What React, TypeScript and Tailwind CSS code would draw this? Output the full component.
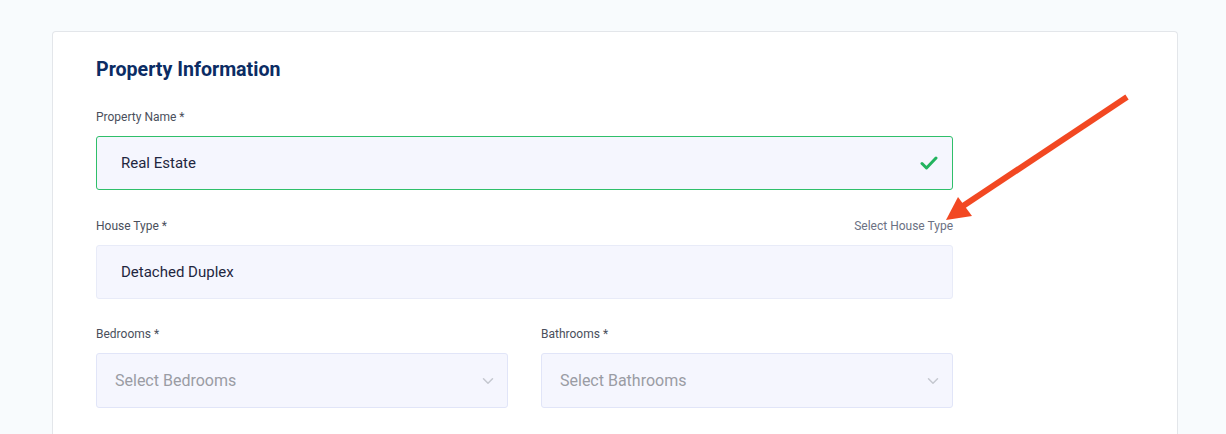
import React from 'react';

// Form field label with the required star
const FieldLabel = ({ text, hint }: { text: string; hint?: string }) => (
  <div className="flex items-center justify-between mb-[11px] h-4">
    <span className="text-[12px] leading-4 text-[#4a4f5c]">{text} *</span>
    {hint && <span className="text-[12px] leading-4 text-[#6b7183]">{hint}</span>}
  </div>
);

const Chevron = () => (
  <svg width="18" height="18" viewBox="0 0 24 24" fill="none" stroke="#c5c8d0" strokeWidth="2" strokeLinecap="round" strokeLinejoin="round">
    <path d="M6 9l6 6 6-6" />
  </svg>
);

const SelectBox = ({ placeholder }: { placeholder: string }) => (
  <div className="flex h-[55px] items-center justify-between rounded-[3px] border border-[#e1e5f8] bg-[#f5f6fe] pl-[18px] pr-[10px]">
    <span className="text-[16px] text-[#9a9ca4]">{placeholder}</span>
    <Chevron />
  </div>
);

export default function App() {
  return (
    <div
      className="relative min-h-[434px] bg-[#f8fbfd] px-[52px] pt-[31px]"
      style={{ fontFamily: 'Roboto, "Liberation Sans", sans-serif' }}
    >
      {/* card */}
      <div className="w-[1126px] h-[420px] rounded-t-[4px] border border-b-0 border-[#e3e6ea] bg-white pl-[43px] pt-[26px]">
        <div className="w-[857px]">
          <h2 className="text-[19.6px] leading-6 font-bold text-[#0b2c64] mb-[27px]">Property Information</h2>

          <FieldLabel text="Property Name" />
          <div className="flex h-[54px] items-center justify-between rounded-[3px] border border-[#2fbf6a] bg-[#f5f6fe] pl-[24px] pr-[14px] mb-[28px]">
            <span className="text-[15px] text-[#1f2640]">Real Estate</span>
            <svg width="18" height="14" viewBox="0 0 18 14" fill="none">
              <path d="M2 7.5l4.5 4.5L16 2" stroke="#22b35e" strokeWidth="3" strokeLinecap="round" strokeLinejoin="round" />
            </svg>
          </div>

          <FieldLabel text="House Type" hint="Select House Type" />
          <div className="flex h-[54px] items-center rounded-[3px] border border-[#e8ebf8] bg-[#f5f6fe] pl-[24px] mb-[27px]">
            <span className="text-[15px] text-[#1f2640]">Detached Duplex</span>
          </div>

          <div className="grid grid-cols-2 gap-[33px]">
            <div>
              <FieldLabel text="Bedrooms" />
              <SelectBox placeholder="Select Bedrooms" />
            </div>
            <div>
              <FieldLabel text="Bathrooms" />
              <SelectBox placeholder="Select Bathrooms" />
            </div>
          </div>
        </div>
      </div>

      {/* annotation arrow */}
      <svg className="pointer-events-none absolute left-0 top-0" width="1226" height="434">
        <line x1="1127" y1="97" x2="957" y2="210" stroke="#f24822" strokeWidth="6" />
        <polygon points="946,220 958,197 972,216" fill="#f24822" />
      </svg>
    </div>
  );
}
